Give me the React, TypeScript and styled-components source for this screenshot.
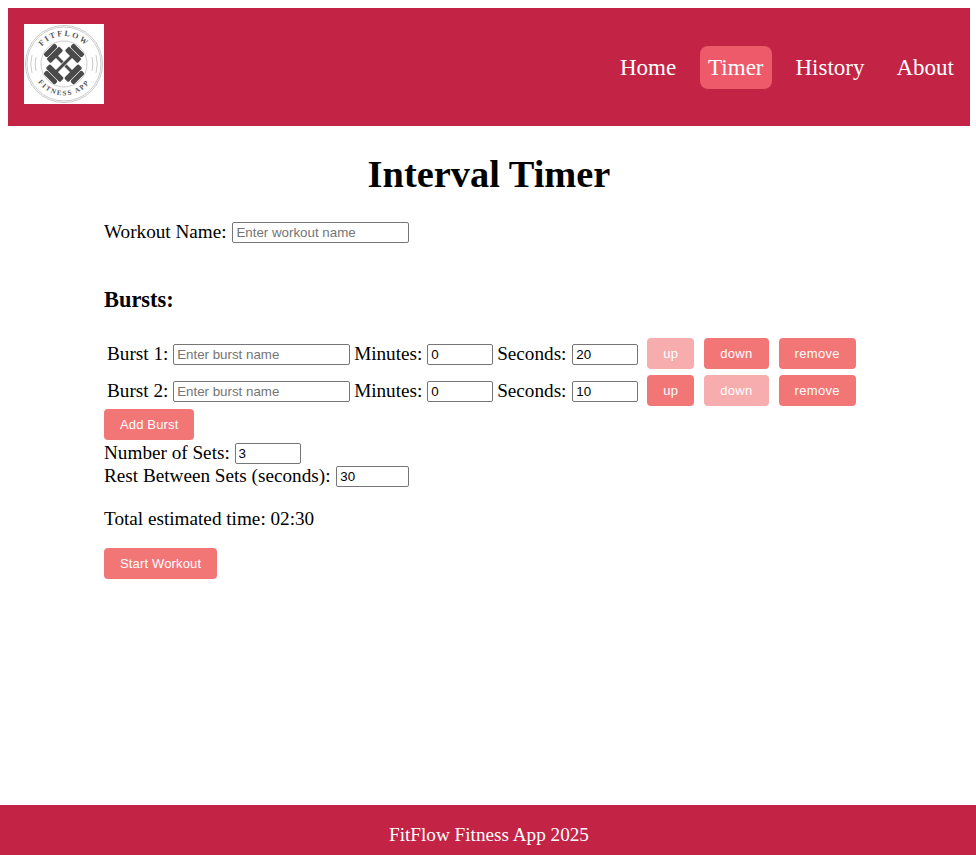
import React from "react";
import styled, { createGlobalStyle } from "styled-components";

const GlobalStyle = createGlobalStyle`
  html, body {
    margin: 0;
    padding: 0;
    background: #fff;
  }
  body {
    font-family: "Liberation Serif", "Times New Roman", serif;
    color: #000;
  }
`;

const Page = styled.div`
  min-height: 855px;
  display: flex;
  flex-direction: column;
  overflow: hidden;
`;

const Header = styled.header`
  margin: 8px 6px 0 8px;
  height: 118px;
  padding: 16px 8px 16px 16px;
  box-sizing: border-box;
  background: #c32345;
  display: flex;
  align-items: flex-start;
  justify-content: space-between;
`;

const LogoBox = styled.div`
  width: 80px;
  height: 80px;
  background: #fff;
  flex: none;
`;

const Nav = styled.nav`
  display: flex;
  align-items: center;
  gap: 16px;
  margin-top: 22px;
`;

const NavLink = styled.a<{ $active?: boolean }>`
  display: block;
  padding: 8px;
  border-radius: 8px;
  font-size: 23px;
  line-height: 27px;
  color: #fff;
  background: ${(props) => (props.$active ? "#ee5a6a" : "transparent")};
`;

const Main = styled.main`
  flex: 1;
  margin: 0 6px 0 8px;
  padding: 0 96px;
`;

const Title = styled.h1`
  margin: 26px 0 0;
  font-size: 38.4px;
  line-height: 44px;
  font-weight: bold;
  text-align: center;
`;

const Row = styled.div`
  font-size: 19.2px;
  line-height: 23px;
`;

const TextInput = styled.input<{ $width: number; $nudge?: number }>`
  width: ${(props) => props.$width}px;
  height: 21px;
  box-sizing: border-box;
  margin-left: ${(props) => props.$nudge ?? 0}px;
  padding: 1px 3px;
  border: 1px solid #767676;
  border-radius: 2px;
  font-family: "Liberation Sans", Arial, sans-serif;
  font-size: 13.33px;
  color: #000;
  background: #fff;
  vertical-align: 1px;

  &::placeholder {
    color: #757575;
    opacity: 1;
  }
`;

const WorkoutRow = styled(Row)`
  margin-top: 24px;
`;

const SectionTitle = styled.h2`
  margin: 44px 0 0;
  font-size: 22.4px;
  line-height: 25px;
  font-weight: bold;
`;

const BurstTable = styled.table`
  margin: 21px 0 -2px;
  border-collapse: separate;
  border-spacing: 2px 4px;
  font-size: 19.2px;
`;

const BurstCell = styled.td`
  padding: 1px;
  white-space: nowrap;
`;

const Button = styled.button`
  height: 31px;
  padding: 0 16px;
  border: none;
  border-radius: 4px;
  background: #f37677;
  color: #fff;
  font-family: "Liberation Sans", Arial, sans-serif;
  font-size: 13px;
  letter-spacing: 0.15px;

  &:disabled {
    opacity: 0.6;
  }
`;

const RowButton = styled(Button)`
  margin: 0 1px 0 5px;
  letter-spacing: 0.3px;
`;

const AddRow = styled.div`
  display: flex;
`;

const SetsRow = styled(Row)`
  margin-top: 1px;
`;

const Total = styled(Row)`
  margin-top: 20px;
`;

const StartRow = styled.div`
  display: flex;
  margin-top: 18px;
`;

const Footer = styled.footer`
  height: 50px;
  padding-left: 2px;
  background: #c32345;
  color: #fff;
  font-size: 19.2px;
  line-height: 60px;
  text-align: center;
`;

function Dumbbell({ rotate }: { rotate: number }) {
  return (
    <g transform={`rotate(${rotate} 40 40)`}>
      <rect x="38.2" y="28" width="3.6" height="24" fill="#4a4a4a" stroke="#fff" strokeWidth="0.8" />
      <g fill="#4a4a4a">
        <rect x="31" y="24" width="18" height="6" rx="1.5" />
        <rect x="30" y="50" width="20" height="6" rx="1.5" />
        <rect x="32" y="18.5" width="16" height="5" rx="2" />
        <rect x="32" y="56.5" width="16" height="5" rx="2" />
      </g>
    </g>
  );
}

function Logo() {
  return (
    <svg width="80" height="80" viewBox="0 0 80 80">
      <defs>
        <path id="logoTop" d="M12 40a28 28 0 0 1 56 0" />
        <path id="logoBottom" d="M8.5 40a31.5 31.5 0 0 0 63 0" />
      </defs>
      <g fill="none" stroke="#a8a8a8" strokeWidth="0.6">
        <circle cx="40" cy="40" r="38.5" />
        <circle cx="40" cy="40" r="37" />
        <circle cx="40" cy="40" r="23" />
        <path d="M8 31a32 32 0 0 0 0 18M72 31a32 32 0 0 1 0 18" />
        <path d="M12 33a28 28 0 0 0 0 14M68 33a28 28 0 0 1 0 14" />
      </g>
      <Dumbbell rotate={-45} />
      <Dumbbell rotate={45} />
      <text fontFamily="Liberation Serif, serif" fontSize="8" fontWeight="bold" fill="#555" letterSpacing="1.8">
        <textPath href="#logoTop" startOffset="50%" textAnchor="middle">FITFLOW</textPath>
      </text>
      <text fontFamily="Liberation Serif, serif" fontSize="7" fontWeight="bold" fill="#555" letterSpacing="1.5">
        <textPath href="#logoBottom" startOffset="50%" textAnchor="middle">FITNESS APP</textPath>
      </text>
    </svg>
  );
}

const bursts = [
  { id: 1, seconds: "20", upDisabled: true, downDisabled: false },
  { id: 2, seconds: "10", upDisabled: false, downDisabled: true },
];

export default function App() {
  return (
    <Page>
      <GlobalStyle />
      <Header>
        <LogoBox>
          <Logo />
        </LogoBox>
        <Nav>
          <NavLink>Home</NavLink>
          <NavLink $active>Timer</NavLink>
          <NavLink>History</NavLink>
          <NavLink>About</NavLink>
        </Nav>
      </Header>
      <Main>
        <Title>Interval Timer</Title>
        <WorkoutRow>
          Workout Name: <TextInput $width={177} $nudge={1} placeholder="Enter workout name" />
        </WorkoutRow>
        <SectionTitle>Bursts:</SectionTitle>
        <BurstTable>
          <tbody>
            {bursts.map((burst) => (
              <tr key={burst.id}>
                <BurstCell>
                  Burst {burst.id}: <TextInput $width={177} placeholder="Enter burst name" />
                </BurstCell>
                <BurstCell>
                  Minutes: <TextInput $width={66} defaultValue="0" />
                </BurstCell>
                <BurstCell>
                  Seconds: <TextInput $width={66} $nudge={1} defaultValue={burst.seconds} />
                </BurstCell>
                <BurstCell>
                  <RowButton disabled={burst.upDisabled}>up</RowButton>
                </BurstCell>
                <BurstCell>
                  <RowButton disabled={burst.downDisabled}>down</RowButton>
                </BurstCell>
                <BurstCell>
                  <RowButton>remove</RowButton>
                </BurstCell>
              </tr>
            ))}
          </tbody>
        </BurstTable>
        <AddRow>
          <Button>Add Burst</Button>
        </AddRow>
        <SetsRow>
          Number of Sets: <TextInput $width={66} defaultValue="3" />
        </SetsRow>
        <Row>
          Rest Between Sets (seconds): <TextInput $width={73} $nudge={1} defaultValue="30" />
        </Row>
        <Total>Total estimated time: 02:30</Total>
        <StartRow>
          <Button>Start Workout</Button>
        </StartRow>
      </Main>
      <Footer>FitFlow Fitness App 2025</Footer>
    </Page>
  );
}
